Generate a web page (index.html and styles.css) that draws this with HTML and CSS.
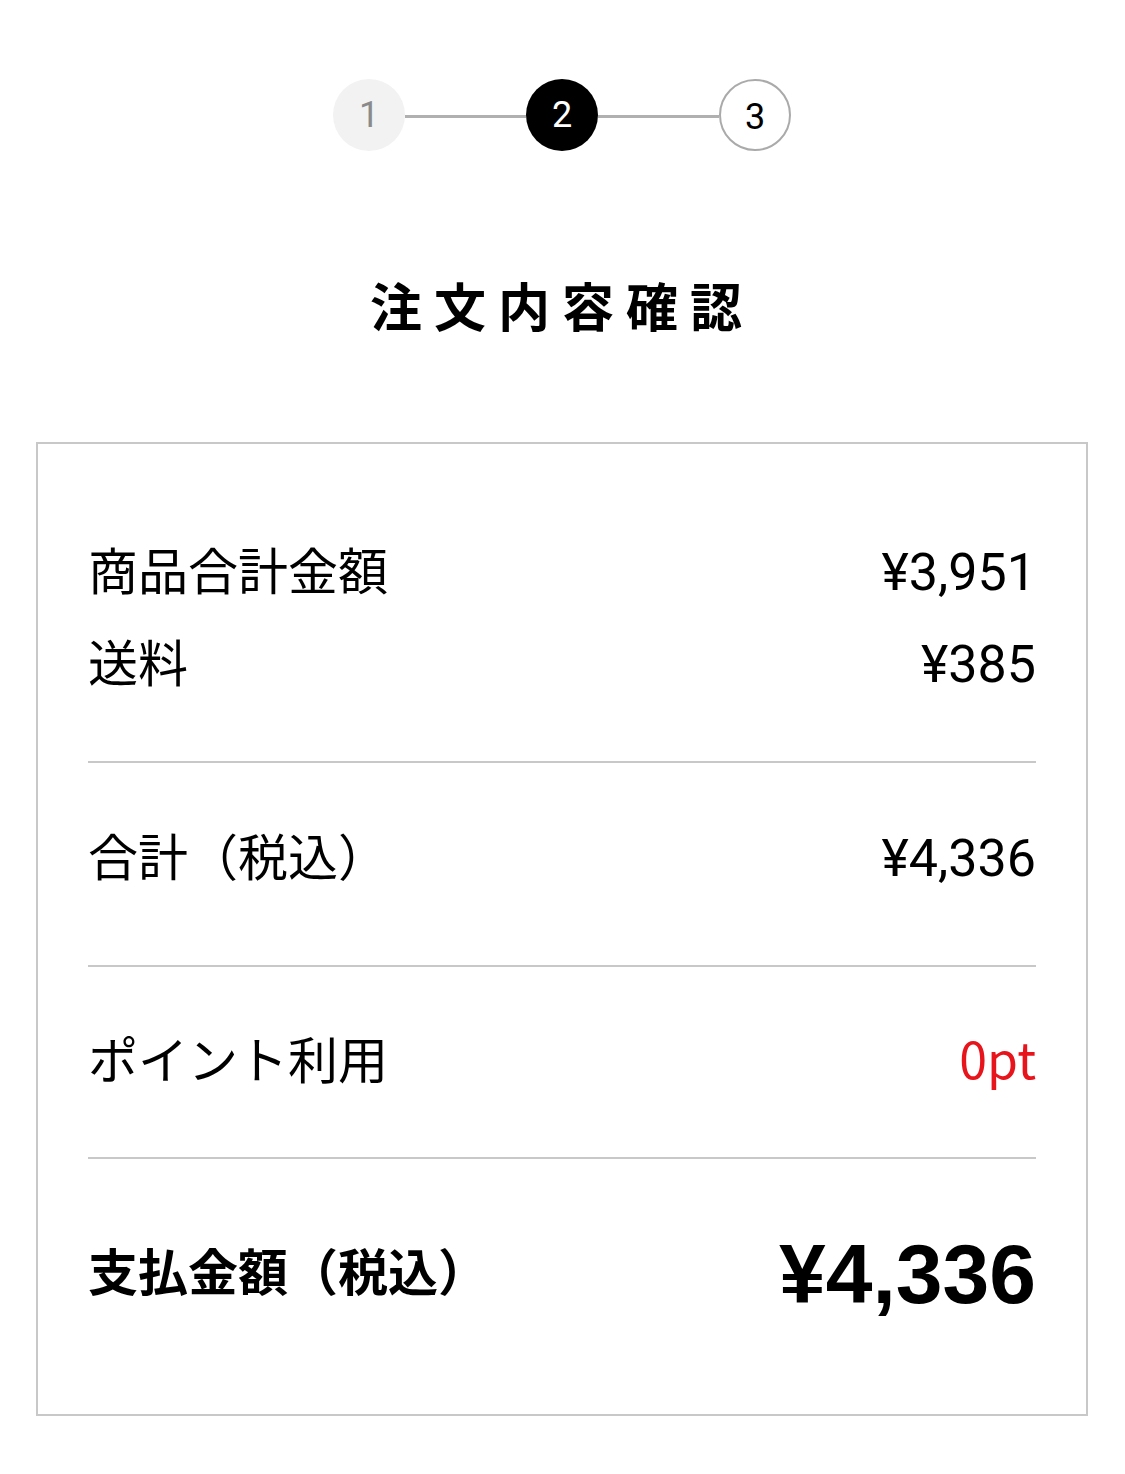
FILE: index.html
```html
<!DOCTYPE html>
<html lang="ja">
<head>
<meta charset="utf-8">
<title>注文内容確認</title>
<link rel="stylesheet" href="styles.css">
</head>
<body>
<main class="page">
  <ol class="stepper">
    <li class="step step--done">1</li>
    <li class="step-line"></li>
    <li class="step step--current">2</li>
    <li class="step-line"></li>
    <li class="step step--next">3</li>
  </ol>

  <h1 class="title">注文内容確認</h1>

  <section class="summary">
    <div class="group group--items">
      <div class="row">
        <span class="label">商品合計金額</span>
        <span class="amount">¥3,951</span>
      </div>
      <div class="row">
        <span class="label">送料</span>
        <span class="amount">¥385</span>
      </div>
    </div>
    <div class="group group--subtotal">
      <div class="row">
        <span class="label">合計（税込）</span>
        <span class="amount">¥4,336</span>
      </div>
    </div>
    <div class="group group--points">
      <div class="row">
        <span class="label">ポイント利用</span>
        <span class="points">0pt</span>
      </div>
    </div>
    <div class="group group--total">
      <div class="row row--total">
        <span class="label label--total">支払金額（税込）</span>
        <span class="amount amount--total">¥4,336</span>
      </div>
    </div>
  </section>
</main>
</body>
</html>
```

FILE: styles.css
```css
* {
  box-sizing: border-box;
}

html,
body {
  margin: 0;
  padding: 0;
  background: #ffffff;
}

body {
  font-family: "Noto Sans CJK JP", "Noto Sans", sans-serif;
  color: #000000;
}

.page {
  width: 1125px;
  padding: 79px 37px 58px 36px;
}

/* progress steps */
.stepper {
  list-style: none;
  margin: 0;
  padding: 0;
  display: flex;
  align-items: center;
  justify-content: center;
}

.step {
  width: 72px;
  height: 72px;
  border-radius: 50%;
  display: flex;
  align-items: center;
  justify-content: center;
  font-family: Roboto, "Liberation Sans", sans-serif;
  font-size: 36px;
  line-height: 1;
}

.step--done {
  background: #f2f2f2;
  color: #8a8a8a;
}

.step--current {
  background: #000000;
  color: #ffffff;
}

.step--next {
  background: #ffffff;
  border: 2px solid #aaaaaa;
  color: #000000;
  padding-top: 4px;
}

.step-line {
  width: 121px;
  height: 3px;
  margin-top: 2px;
  background: #b0b0b0;
}

.title {
  margin: 118px 0 0;
  text-align: center;
  font-size: 52px;
  line-height: 72px;
  font-weight: 700;
  letter-spacing: 12px;
}

/* summary box */
.summary {
  margin-top: 101px;
  border: 2px solid #c8c8c8;
  padding: 0 50px;
}

.group + .group {
  border-top: 2px solid #c8c8c8;
}

.group--items {
  padding: 78px 0 55px;
}

.group--subtotal {
  padding: 45px 0 65px;
}

.group--points {
  padding: 44px 0 54px;
}

.group--total {
  padding: 64px 0 99px;
}

.row {
  display: flex;
  justify-content: space-between;
  align-items: baseline;
  height: 92px;
}

.row--total {
  align-items: center;
}

.label {
  font-size: 50px;
  line-height: 92px;
}

.label--total {
  font-weight: 700;
}

.amount {
  font-family: Roboto, "Liberation Sans", sans-serif;
  font-size: 52px;
  line-height: 92px;
}

.points {
  font-size: 50px;
  line-height: 92px;
  color: #e8141c;
}

.amount--total {
  font-family: "Liberation Sans", Arial, sans-serif;
  font-weight: 700;
  font-size: 84px;
  padding-top: 10px;
}
```
